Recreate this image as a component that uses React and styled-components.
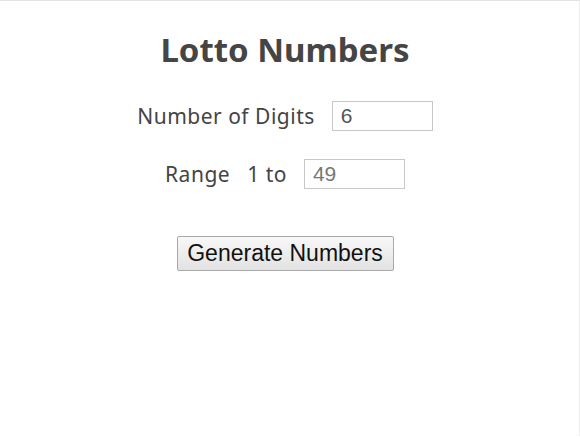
import React, { useState } from "react";
import styled, { createGlobalStyle } from "styled-components";

const GlobalStyle = createGlobalStyle`
  html, body {
    margin: 0;
    padding: 0;
    background: #fff;
  }
  body {
    border-top: 1px solid #e3e3e3;
    border-right: 1px solid #ececec;
    min-height: 436px;
    box-sizing: border-box;
  }
`;

const App = () => {
  const [digits, setDigits] = useState("6");
  const [range, setRange] = useState("49");

  return (
    <>
      <GlobalStyle />
      <Container>
        <Title>Lotto Numbers</Title>
        <Row>
          <Label>Number of Digits</Label>
          <Input value={digits} onChange={(e) => setDigits(e.target.value)} />
        </Row>
        <Row $top={28}>
          <Label>Range</Label>
          <Label>1 to</Label>
          <Input value={range} $muted onChange={(e) => setRange(e.target.value)} />
        </Row>
        <Button type="button">Generate Numbers</Button>
      </Container>
    </>
  );
};

const Container = styled.div`
  width: 570px;
  display: flex;
  flex-direction: column;
  align-items: center;
  padding-top: 30px;
`;

const Title = styled.h1`
  margin: 0;
  font-family: "Noto Sans", "Open Sans", sans-serif;
  font-weight: 700;
  font-size: 33px;
  line-height: 38px;
  color: #454545;
`;

const Row = styled.div`
  display: flex;
  align-items: center;
  gap: 17px;
  margin-top: ${(p) => (p.$top ? p.$top : 32)}px;
`;

const Label = styled.span`
  font-family: "Noto Sans", "Open Sans", sans-serif;
  font-size: 21px;
  letter-spacing: 0.5px;
  color: #444;
`;

const Input = styled.input`
  width: 101px;
  height: 30px;
  box-sizing: border-box;
  border: 1px solid #c8c8c8;
  padding: 0 8px;
  font-family: "Liberation Sans", Arial, sans-serif;
  font-size: 21px;
  color: ${(p) => (p.$muted ? "#777" : "#555")};
  outline: none;
`;

const Button = styled.button`
  margin-top: 47px;
  width: 217px;
  height: 35px;
  border: 1px solid #a9a9a9;
  border-radius: 2px;
  background: linear-gradient(#f8f8f8, #e2e2e2);
  font-family: "Liberation Sans", Arial, sans-serif;
  font-size: 23px;
  color: #111;
  cursor: pointer;
`;

export default App;
